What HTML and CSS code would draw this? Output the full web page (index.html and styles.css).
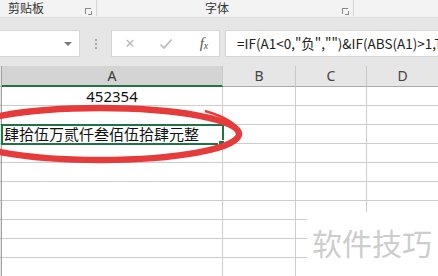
FILE: index.html
```html
<!DOCTYPE html>
<html lang="zh-CN">
  <head>
    <meta charset="UTF-8" />
    <meta name="viewport" content="width=device-width, initial-scale=1.0" />
    <title>Excel – 数字转大写</title>
    <link rel="stylesheet" href="styles.css">
  </head>
  <body>
    <div id="app">
      <div class="ribbon">
        <div class="group group-clip">
          <span class="group-label">剪贴板</span>
          <span class="launcher"></span>
        </div>
        <div class="group group-font">
          <span class="group-label">字体</span>
          <span class="launcher"></span>
        </div>
        <div class="group group-rest"></div>
      </div>

      <div class="formula-bar">
        <div class="name-box">
          <span class="dropdown"></span>
        </div>
        <div class="grip">
          <i></i><i></i><i></i>
        </div>
        <div class="fx-box">
          <span class="fx-btn cancel">✕</span>
          <span class="fx-btn enter">
            <svg width="14" height="12" viewBox="0 0 14 12">
              <path d="M1.5 6.5 L5 10 L12.5 1.5" fill="none" stroke="#b9b9b9" stroke-width="1.6" />
            </svg>
          </span>
          <span class="fx-btn fx"><em>f</em><small>x</small></span>
        </div>
        <div class="formula">=IF(A1&lt;0,"负","")&amp;IF(ABS(A1)&gt;1,T</div>
      </div>

      <div class="sheet">
        <div class="corner"></div>
        <div class="col-head active">A</div>
        <div class="col-head">B</div>
        <div class="col-head">C</div>
        <div class="col-head last">D</div>

        <div class="row-head"></div>
        <div class="cell num">452354</div>
        <div class="cell"></div>
        <div class="cell"></div>
        <div class="cell last"></div>

        <div class="row-head"></div>
        <div class="cell"></div>
        <div class="cell"></div>
        <div class="cell"></div>
        <div class="cell last"></div>

        <div class="row-head"></div>
        <div class="cell selected">肆拾伍万贰仟叁佰伍拾肆元整</div>
        <div class="cell"></div>
        <div class="cell"></div>
        <div class="cell last"></div>

        <div class="row-head"></div>
        <div class="cell"></div>
        <div class="cell"></div>
        <div class="cell"></div>
        <div class="cell last"></div>

        <div class="row-head"></div>
        <div class="cell"></div>
        <div class="cell"></div>
        <div class="cell"></div>
        <div class="cell last"></div>

        <div class="row-head"></div>
        <div class="cell"></div>
        <div class="cell"></div>
        <div class="cell"></div>
        <div class="cell last"></div>

        <div class="row-head"></div>
        <div class="cell"></div>
        <div class="cell"></div>
        <div class="cell"></div>
        <div class="cell last"></div>

        <div class="row-head"></div>
        <div class="cell"></div>
        <div class="cell"></div>
        <div class="cell"></div>
        <div class="cell last"></div>

        <div class="row-head"></div>
        <div class="cell"></div>
        <div class="cell"></div>
        <div class="cell"></div>
        <div class="cell last"></div>

        <div class="row-head"></div>
        <div class="cell"></div>
        <div class="cell"></div>
        <div class="cell"></div>
        <div class="cell last"></div>
      </div>

      <!-- 红色圈注 -->
      <svg class="mark" width="438" height="276" viewBox="0 0 438 276">
        <ellipse cx="100" cy="134" rx="139" ry="26" fill="none" stroke="#e63b3b" stroke-width="6.5" />
        <path d="M205 111 Q236 120 240 133" fill="none" stroke="#e63b3b" stroke-width="2.5" />
      </svg>

      <div class="watermark">软件技巧</div>
    </div>
  </body>
</html>
```

FILE: styles.css
```css
* {
  box-sizing: border-box;
  margin: 0;
  padding: 0;
}

html,
body {
  width: 438px;
  height: 276px;
  overflow: hidden;
  background: #fff;
  font-family: "Noto Sans CJK SC", "Noto Sans", sans-serif;
}

#app {
  position: relative;
  width: 438px;
  height: 276px;
  overflow: hidden;
}

/* ribbon group labels */
.ribbon {
  height: 18px;
  display: flex;
  background: #f3f3f3;
  border-bottom: 1px solid #dedede;
}

.group {
  position: relative;
  display: flex;
  align-items: center;
  height: 16px;
  border-right: 1px solid #d4d4d4;
}

.group-clip {
  width: 97px;
  padding-left: 8px;
}

.group-font {
  width: 257px;
  justify-content: center;
  padding-right: 16px;
}

.group-rest {
  flex: 1;
  border-right: none;
}

.group-label {
  font-size: 12px;
  line-height: 16px;
  color: #333;
}

.launcher {
  position: absolute;
  right: 5px;
  bottom: 2px;
  width: 6px;
  height: 6px;
  border-left: 1px solid #8a8a8a;
  border-top: 1px solid #8a8a8a;
}

.launcher::after {
  content: "";
  position: absolute;
  right: -1px;
  bottom: -1px;
  width: 3px;
  height: 3px;
  border-right: 1px solid #8a8a8a;
  border-bottom: 1px solid #8a8a8a;
}

/* formula bar */
.formula-bar {
  height: 48px;
  display: flex;
  align-items: flex-start;
  padding-top: 12px;
  background: #e6e6e6;
}

.name-box {
  width: 80px;
  height: 27px;
  background: #fff;
  border: 1px solid #d6d6d6;
  border-left: none;
  display: flex;
  align-items: center;
  justify-content: flex-end;
  padding-right: 7px;
}

.dropdown {
  width: 0;
  height: 0;
  border-left: 4px solid transparent;
  border-right: 4px solid transparent;
  border-top: 4px solid #7a7a7a;
}

.grip {
  width: 31px;
  height: 27px;
  display: flex;
  flex-direction: column;
  align-items: center;
  justify-content: center;
  gap: 2px;
}

.grip i {
  width: 2px;
  height: 2px;
  background: #a8a8a8;
}

.fx-box {
  width: 109px;
  height: 27px;
  background: #fff;
  border: 1px solid #d6d6d6;
  display: flex;
  align-items: center;
  padding-left: 11px;
}

.fx-btn {
  display: flex;
  align-items: center;
  justify-content: center;
  height: 25px;
  color: #b9b9b9;
  font-size: 14px;
}

.cancel {
  width: 14px;
  font-size: 13px;
  margin-right: 22px;
  font-family: "DejaVu Sans", sans-serif;
}

.enter {
  width: 14px;
  margin-right: 23px;
}

.fx {
  width: 16px;
  color: #555;
  font-family: "Liberation Serif", serif;
}

.fx em {
  font-size: 15px;
  font-style: italic;
}

.fx small {
  font-size: 10px;
  font-style: italic;
  margin-top: 4px;
}

.formula {
  flex: 1;
  height: 27px;
  margin-left: 5px;
  background: #fff;
  border: 1px solid #d6d6d6;
  border-right: none;
  padding-left: 11px;
  font-size: 13.5px;
  line-height: 25px;
  color: #222;
  white-space: nowrap;
  overflow: hidden;
}

/* sheet grid */
.sheet {
  display: grid;
  grid-template-columns: 2px 221px 73px 71px 1fr;
  grid-template-rows: 21px repeat(10, 19px);
}

.corner,
.row-head {
  background: #e6e6e6;
  border-right: 1px solid #9f9f9f;
  box-shadow: inset 0 -1px 0 #b4b4b4;
}

.col-head {
  background: #e6e6e6;
  border-right: 1px solid #c8c8c8;
  border-bottom: 1px solid #ababab;
  text-align: center;
  font-family: "Noto Sans", sans-serif;
  font-size: 14px;
  line-height: 20px;
  color: #444;
}

.col-head.active {
  background: #d4d4d4;
  color: #3a3a3a;
  border-bottom: 2px solid #217346;
  line-height: 19px;
}

.cell {
  border-right: 1px solid #cdcdcd;
  box-shadow: inset 0 -1px 0 #cdcdcd;
  font-size: 15px;
  line-height: 18px;
  color: #111;
  white-space: nowrap;
}

.last {
  border-right: none;
}

.cell.num {
  text-align: center;
  font-family: "Noto Sans", sans-serif;
}

.cell.selected {
  position: relative;
  z-index: 2;
  padding-left: 2px;
  outline: 2px solid #217346;
  outline-offset: -1px;
}

.cell.selected::after {
  content: "";
  position: absolute;
  right: -3px;
  bottom: -3px;
  width: 5px;
  height: 5px;
  background: #217346;
  border: 1px solid #fff;
}

.mark {
  position: absolute;
  left: 0;
  top: 0;
  z-index: 3;
  pointer-events: none;
}

.watermark {
  position: absolute;
  left: 307px;
  top: 212px;
  width: 131px;
  height: 64px;
  z-index: 4;
  background: #fff;
  padding: 10px 0 0 5px;
  font-size: 30px;
  line-height: 40px;
  color: #cdcdcd;
}
```
